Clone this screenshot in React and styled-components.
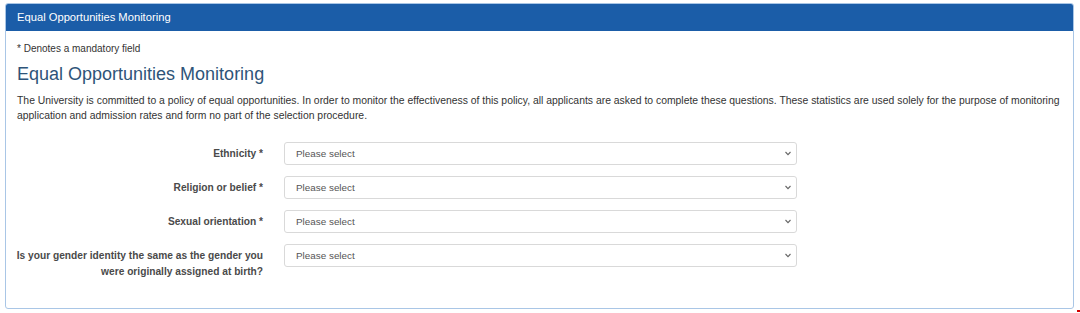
import React, { useState } from 'react';
import styled, { createGlobalStyle } from 'styled-components';

const GlobalStyle = createGlobalStyle`
  html, body {
    margin: 0;
    padding: 0;
    background: #fff;
    font-family: "Liberation Sans", Arial, sans-serif;
    color: #333;
  }
`;

const Page = styled.div`
  position: relative;
  width: 1080px;
  height: 313px;
  padding: 3px 6px 0 5px;
  box-sizing: border-box;
`;

const Panel = styled.section`
  border: 1px solid #a9c6e6;
  border-radius: 3px;
  height: 306px;
  box-sizing: border-box;
  overflow: hidden;
`;

const PanelHeading = styled.div`
  background: #1b5da8;
  color: #fff;
  font-size: 11.2px;
  height: 27px;
  line-height: 27px;
  padding: 0 11px;
`;

const PanelBody = styled.div`
  padding: 10px 11px;
`;

const Note = styled.p`
  margin: 0;
  font-size: 10px;
  line-height: 15px;
  color: #333;
`;

const Title = styled.h2`
  margin: 7px 0 8px;
  font-size: 18px;
  font-weight: normal;
  line-height: 22px;
  color: #2e5479;
`;

const Intro = styled.p`
  margin: 0 0 19px;
  font-size: 10.4px;
  line-height: 15px;
  color: #333;
`;

const Form = styled.form`
  display: flex;
  flex-direction: column;
  gap: 11px;
`;

const Row = styled.div`
  display: grid;
  grid-template-columns: 256px 513px;
  column-gap: 21px;
  align-items: start;
  margin-left: -10px;
`;

const Label = styled.label`
  text-align: right;
  font-size: 10.2px;
  font-weight: bold;
  line-height: 16px;
  color: #4a4a4a;
  padding-top: 4px;
`;

const SelectWrap = styled.div`
  position: relative;
`;

const Select = styled.select`
  appearance: none;
  width: 100%;
  height: 23px;
  box-sizing: border-box;
  border: 1px solid #d9d9d9;
  border-radius: 3px;
  background: #fff;
  padding: 0 20px 0 11px;
  font-family: "Liberation Sans", Arial, sans-serif;
  font-size: 9.9px;
  color: #555;
  outline: none;
`;

const Chevron = styled.svg`
  position: absolute;
  right: 6px;
  top: 9px;
  width: 6px;
  height: 5px;
  pointer-events: none;
`;

const Mark = styled.span`
  position: absolute;
  right: 0;
  bottom: 1px;
  width: 3px;
  height: 2px;
  background: #d40000;
`;

const fields = [
  { id: 'ethnicity', label: 'Ethnicity *' },
  { id: 'religion', label: 'Religion or belief *' },
  { id: 'orientation', label: 'Sexual orientation *' },
  {
    id: 'gender',
    label: 'Is your gender identity the same as the gender you were originally assigned at birth?',
  },
];

function App() {
  const [values, setValues] = useState({});

  return (
    <Page>
      <GlobalStyle />
      <Panel>
        <PanelHeading>Equal Opportunities Monitoring</PanelHeading>
        <PanelBody>
          <Note>* Denotes a mandatory field</Note>
          <Title>Equal Opportunities Monitoring</Title>
          <Intro>
            The University is committed to a policy of equal opportunities. In order to monitor the
            effectiveness of this policy, all applicants are asked to complete these questions. These
            statistics are used solely for the purpose of monitoring application and admission rates
            and form no part of the selection procedure.
          </Intro>
          <Form onSubmit={e => e.preventDefault()}>
            {fields.map(f => (
              <Row key={f.id}>
                <Label htmlFor={f.id}>{f.label}</Label>
                <SelectWrap>
                  <Select
                    id={f.id}
                    value={values[f.id] || ''}
                    onChange={e => setValues({ ...values, [f.id]: e.target.value })}
                  >
                    <option value="">Please select</option>
                    <option value="yes">Yes</option>
                    <option value="no">No</option>
                    <option value="na">Prefer not to say</option>
                  </Select>
                  <Chevron viewBox="0 0 6 5">
                    <path d="M0.5 1 L3 3.6 L5.5 1" fill="none" stroke="#666" strokeWidth="1.1" />
                  </Chevron>
                </SelectWrap>
              </Row>
            ))}
          </Form>
        </PanelBody>
      </Panel>
      <Mark />
    </Page>
  );
}

export default App;
